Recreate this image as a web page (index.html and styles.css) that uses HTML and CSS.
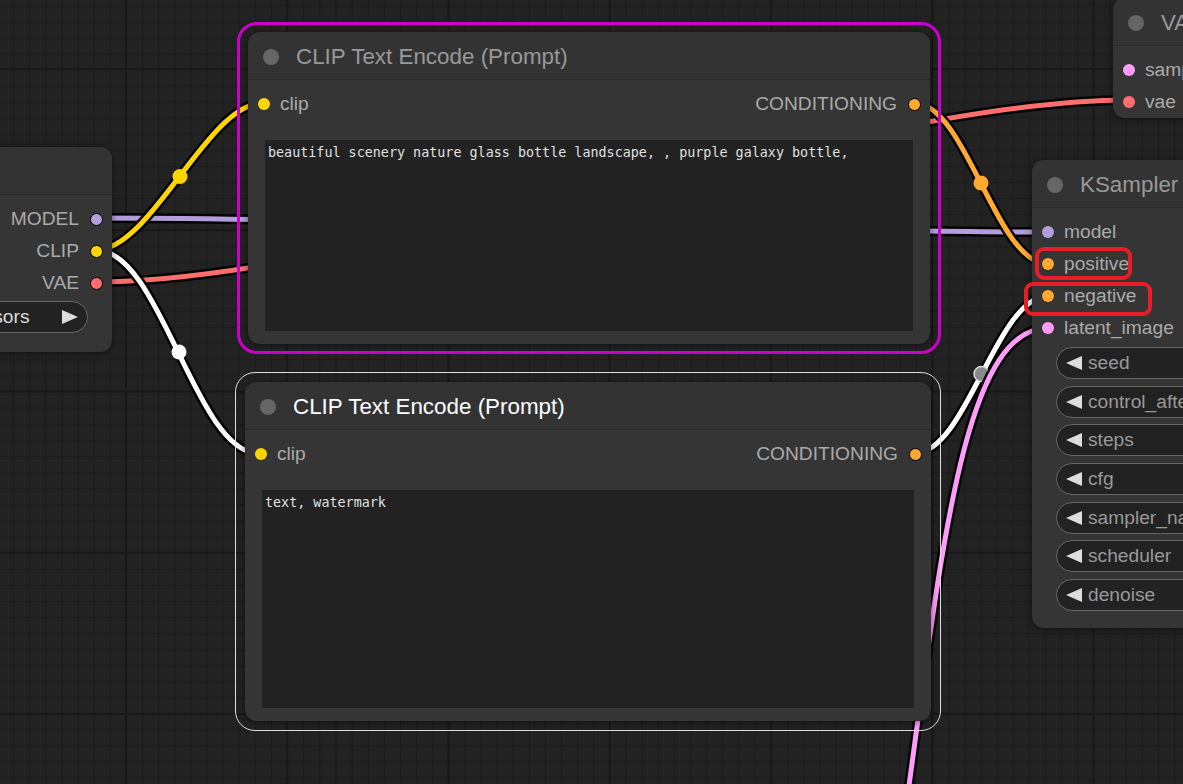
FILE: index.html
```html
<!DOCTYPE html>
<html lang="en">
<head>
<meta charset="utf-8">
<title>ComfyUI graph</title>
<link rel="stylesheet" href="styles.css">
</head>
<body>
<div class="canvas">
  <svg class="links" width="1183" height="784" viewBox="0 0 1183 784">
    <g class="wire w-model">
      <path class="wb" d="M96,218 C334,218 810,232 1048,232"/>
      <path class="wc" d="M96,218 C334,218 810,232 1048,232"/>
    </g>
    <g class="wire w-vae">
      <path class="wb" d="M96,282 C358,282 866,100 1128,100"/>
      <path class="wc" d="M96,282 C358,282 866,100 1128,100"/>
    </g>
    <g class="wire w-clip">
      <path class="wb" d="M96,250 C151.6,250 207.4,103 263,103"/>
      <path class="wc" d="M96,250 C151.6,250 207.4,103 263,103"/>
      <circle class="mid" cx="180" cy="176.5" r="7.5"/>
    </g>
    <g class="wire w-sel">
      <path class="wb" d="M96,250 C161.4,250 194.6,454 260,454"/>
      <path class="wc" d="M96,250 C161.4,250 194.6,454 260,454"/>
      <circle class="mid" cx="179" cy="352" r="7.5"/>
    </g>
    <g class="wire w-cond">
      <path class="wb" d="M914,103 C966.4,103 995.6,264 1048,264"/>
      <path class="wc" d="M914,103 C966.4,103 995.6,264 1048,264"/>
      <circle class="mid" cx="981" cy="183" r="7.5"/>
    </g>
    <g class="wire w-sel">
      <path class="wb" d="M915,453 C966.4,453 996.6,296 1048,296"/>
      <path class="wc" d="M915,453 C966.4,453 996.6,296 1048,296"/>
      <circle class="mid mid-dim" cx="981.5" cy="374" r="7.5"/>
    </g>
    <g class="wire w-latent">
      <path class="wb" d="M1048,328 C965,328 943,540 907,800"/>
      <path class="wc" d="M1048,328 C965,328 943,540 907,800"/>
    </g>
  </svg>

  <div class="node n-ckpt">
    <div class="title"><span class="tdot"></span><span class="ttext">Load Checkpoint</span></div>
    <div class="body">
      <div class="row"><div class="out"><span class="label">MODEL</span><span class="odot c-model"></span></div></div>
      <div class="row"><div class="out"><span class="label">CLIP</span><span class="odot c-clip"></span></div></div>
      <div class="row"><div class="out"><span class="label">VAE</span><span class="odot c-vae"></span></div></div>
      <div class="widgets w-ckpt">
        <div class="widget"><span class="arrow-l"></span><span class="wl">ckpt_name</span><span class="wv">v1-5-pruned-emaonly.safetensors</span><span class="arrow-r"></span></div>
      </div>
    </div>
  </div>

  <div class="node n-pos">
    <div class="title"><span class="tdot"></span><span class="ttext">CLIP Text Encode (Prompt)</span></div>
    <div class="body">
      <div class="row">
        <div class="in"><span class="idot c-clip"></span><span class="label">clip</span></div>
        <div class="out"><span class="label">CONDITIONING</span><span class="odot c-cond"></span></div>
      </div>
      <div class="prompt">beautiful scenery nature glass bottle landscape, , purple galaxy bottle,</div>
    </div>
  </div>

  <div class="node n-neg">
    <div class="title"><span class="tdot"></span><span class="ttext">CLIP Text Encode (Prompt)</span></div>
    <div class="body">
      <div class="row">
        <div class="in"><span class="idot c-clip"></span><span class="label">clip</span></div>
        <div class="out"><span class="label">CONDITIONING</span><span class="odot c-cond"></span></div>
      </div>
      <div class="prompt">text, watermark</div>
    </div>
  </div>

  <div class="node n-vae">
    <div class="title"><span class="tdot"></span><span class="ttext">VAE Decode</span></div>
    <div class="body">
      <div class="row">
        <div class="in"><span class="idot c-latent"></span><span class="label">samples</span></div>
        <div class="out"><span class="label">IMAGE</span><span class="odot c-image"></span></div>
      </div>
      <div class="row">
        <div class="in"><span class="idot c-vae"></span><span class="label">vae</span></div>
      </div>
    </div>
  </div>

  <div class="node n-ks">
    <div class="title"><span class="tdot"></span><span class="ttext">KSampler</span></div>
    <div class="body">
      <div class="row">
        <div class="in"><span class="idot c-model"></span><span class="label">model</span></div>
        <div class="out"><span class="label">LATENT</span><span class="odot c-latent"></span></div>
      </div>
      <div class="row"><div class="in"><span class="idot c-cond"></span><span class="label">positive</span></div></div>
      <div class="row"><div class="in"><span class="idot c-cond"></span><span class="label">negative</span></div></div>
      <div class="row"><div class="in"><span class="idot c-latent"></span><span class="label">latent_image</span></div></div>
      <div class="widgets w-ks">
        <div class="widget"><span class="arrow-l"></span><span class="wl">seed</span><span class="wv">156680208700286</span><span class="arrow-r"></span></div>
        <div class="widget"><span class="arrow-l"></span><span class="wl">control_after_generate</span><span class="wv">randomize</span><span class="arrow-r"></span></div>
        <div class="widget"><span class="arrow-l"></span><span class="wl">steps</span><span class="wv">20</span><span class="arrow-r"></span></div>
        <div class="widget"><span class="arrow-l"></span><span class="wl">cfg</span><span class="wv">8.0</span><span class="arrow-r"></span></div>
        <div class="widget"><span class="arrow-l"></span><span class="wl">sampler_name</span><span class="wv">euler</span><span class="arrow-r"></span></div>
        <div class="widget"><span class="arrow-l"></span><span class="wl">scheduler</span><span class="wv">normal</span><span class="arrow-r"></span></div>
        <div class="widget"><span class="arrow-l"></span><span class="wl">denoise</span><span class="wv">1.00</span><span class="arrow-r"></span></div>
      </div>
    </div>
  </div>

  <div class="hl hl-pos"></div>
  <div class="hl hl-neg"></div>
</div>
</body>
</html>
```

FILE: styles.css
```css
html, body {
  margin: 0;
  padding: 0;
  background: #222;
}

body {
  font-family: "Liberation Sans", Arial, sans-serif;
}

.canvas {
  position: relative;
  width: 1183px;
  height: 784px;
  overflow: hidden;
  background-color: #222222;
  background-image:
    linear-gradient(to right, #181818 2px, transparent 2px),
    linear-gradient(to bottom, #181818 2px, transparent 2px),
    linear-gradient(to right, #1c1c1c 1px, transparent 1px),
    linear-gradient(to bottom, #1c1c1c 1px, transparent 1px);
  background-size: 161.25px 161.25px, 161.25px 161.25px, 16.125px 16.125px, 16.125px 16.125px;
  background-position: 125px 68px, 125px 68px, 13px 4.5px, 13px 4.5px;
}

/* ---------- links ---------- */
.links {
  position: absolute;
  left: 0;
  top: 0;
}

.wire path {
  fill: none;
  stroke-linecap: round;
}

.wire .wb {
  stroke: #000;
  stroke-opacity: 0.9;
  stroke-width: 10;
}

.wire .wc {
  stroke-width: 5;
}

.w-model .wc { stroke: #b39ddb; }
.w-vae .wc { stroke: #ff6e6e; }
.w-clip .wc { stroke: #ffd500; }
.w-clip .mid { fill: #ffd500; }
.w-cond .wc { stroke: #ffa931; }
.w-cond .mid { fill: #ffa931; }
.w-sel .wc { stroke: #ffffff; }
.w-sel .mid { fill: #ffffff; }
.w-sel .mid-dim { fill: #8a8a8a; stroke: #d8d8d8; stroke-width: 1.5; }
.w-latent .wc { stroke: #ff9cf9; }

/* ---------- nodes ---------- */
.node {
  position: absolute;
  display: flex;
  flex-direction: column;
  background: #353535;
  border-radius: 12px;
  box-shadow: 0 1px 7px rgba(0, 0, 0, 0.5);
}

.title {
  flex: none;
  height: 48px;
  box-sizing: border-box;
  display: flex;
  align-items: center;
  padding-left: 15px;
  padding-top: 2px;
  background: #333;
  border-bottom: 1px solid #2b2b2b;
  border-radius: 12px 12px 0 0;
  font-size: 22.4px;
  color: #999;
  white-space: nowrap;
  overflow: hidden;
}

.tdot {
  flex: none;
  width: 16px;
  height: 16px;
  border-radius: 50%;
  background: #666;
  margin-right: 17px;
}

.body {
  flex: 1;
  min-height: 0;
  display: flex;
  flex-direction: column;
  padding-top: 8px;
}

.row {
  flex: none;
  height: 32px;
  display: flex;
  align-items: center;
  font-size: 19.2px;
  color: #aaa;
  white-space: nowrap;
}

.in {
  display: flex;
  align-items: center;
  padding-left: 10px;
}

.in .label {
  margin-left: 10px;
}

.out {
  margin-left: auto;
  display: flex;
  align-items: center;
  padding-right: 9px;
}

.out .label {
  margin-right: 11px;
}

.idot {
  width: 12px;
  height: 12px;
  border-radius: 50%;
  flex: none;
}

.odot {
  width: 13px;
  height: 13px;
  box-sizing: border-box;
  border-radius: 50%;
  border: 1.5px solid #000;
  flex: none;
}

.c-model { background: #b39ddb; }
.c-clip { background: #ffd500; }
.c-vae { background: #ff6e6e; }
.c-cond { background: #ffa931; }
.c-latent { background: #ff9cf9; }
.c-image { background: #64b5f6; }

.prompt {
  flex: 1;
  margin: 20px 17px 13px;
  padding: 4px 3px;
  background: #222;
  color: #e0e0e0;
  font-family: "DejaVu Sans Mono", "Liberation Mono", monospace;
  font-size: 13.4px;
  line-height: 18px;
  white-space: pre-wrap;
}

/* ---------- widgets ---------- */
.widgets {
  display: flex;
  flex-direction: column;
  gap: 6.7px;
  padding: 0 24px;
}

.w-ks { padding-top: 3px; }
.w-ckpt { padding-top: 2px; }

.widget {
  height: 32px;
  box-sizing: border-box;
  display: flex;
  align-items: center;
  border: 1.5px solid #666;
  border-radius: 16px;
  background: #222;
  font-size: 19.2px;
  color: #999;
  white-space: nowrap;
  overflow: hidden;
}

.arrow-l {
  flex: none;
  width: 0;
  height: 0;
  border-top: 7.5px solid transparent;
  border-bottom: 7.5px solid transparent;
  border-right: 16px solid #ddd;
  margin-left: 9px;
  margin-right: 6px;
}

.arrow-r {
  flex: none;
  width: 0;
  height: 0;
  border-top: 7.5px solid transparent;
  border-bottom: 7.5px solid transparent;
  border-left: 16px solid #ddd;
  margin-right: 9.5px;
}

.wv {
  margin-left: auto;
  margin-right: 32px;
  color: #ddd;
}

/* ---------- node placement on the canvas ---------- */
.n-ckpt { left: -488px; top: 147px; width: 600px; height: 205px; }
.n-pos  { left: 248px; top: 32px; width: 682px; height: 312px; }
.n-neg  { left: 245px; top: 382px; width: 686px; height: 339px; }
.n-vae  { left: 1113px; top: -2px; width: 250px; height: 120px; }
.n-ks   { left: 1032px; top: 160px; width: 420px; height: 468px; }

.n-neg .title { color: #fff; }

.n-pos::before {
  content: "";
  position: absolute;
  top: -10px;
  bottom: -10px;
  left: -11px;
  right: -11px;
  border: 3px solid #cc00cc;
  border-radius: 20px;
  pointer-events: none;
}

.n-neg::before {
  content: "";
  position: absolute;
  top: -10px;
  bottom: -10px;
  left: -10px;
  right: -10px;
  border: 1.5px solid #ddd;
  border-radius: 20px;
  pointer-events: none;
}

/* ---------- annotation boxes ---------- */
.hl {
  position: absolute;
  box-sizing: border-box;
  border: 4px solid #e81e26;
  border-radius: 9px;
}

.hl-pos { left: 1035px; top: 247px; width: 97px; height: 33px; }
.hl-neg { left: 1024px; top: 282px; width: 128px; height: 34px; }
```
